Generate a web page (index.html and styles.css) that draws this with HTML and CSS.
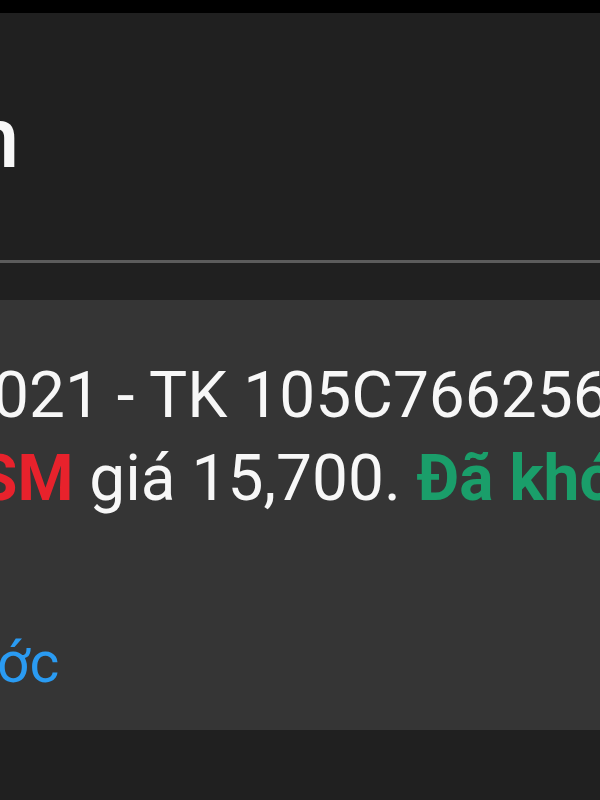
FILE: index.html
```html
<!DOCTYPE html>
<html lang="vi">
<head>
    <meta charset="UTF-8">
    <meta name="viewport" content="width=device-width, initial-scale=1.0">
    <title>Thông tin</title>
    <link rel="stylesheet" href="styles.css">
</head>
<body>
    <div class="status-bar"></div>

    <header class="toolbar">
        <div class="title-row">
            <span class="clip"><span>Thông ti</span></span><span class="title">n</span>
        </div>
    </header>
    <div class="divider"></div>

    <main class="content">
        <section class="notice">
            <div class="line line-first">
                <span class="clip"><span>Ngày 15/03/2</span></span>
                <span>021 - TK 105C766256: Lệnh mua 1,000</span>
            </div>
            <div class="line line-second">
                <span class="clip"><span>CP <b class="ticker">A</b></span></span>
                <span><b class="ticker">SM</b> giá 15,700. <b class="matched">Đã khớp 1,000 CP</b></span>
            </div>
            <div class="line line-link">
                <span class="clip"><span class="link">Xem lệnh trư</span></span>
                <a class="link" href="#">ớc</a>
            </div>
        </section>
    </main>
</body>
</html>
```

FILE: styles.css
```css
body {
    font-family: Roboto, 'Noto Sans', sans-serif;
    background-color: #202020;
    color: #f7f7f7;
    margin: 0;
    padding: 0;
    overflow: hidden;
}

.status-bar {
    height: 13px;
    background: #000;
}

.toolbar {
    background: #202020;
    padding: 83px 0 79px 0;
    overflow: hidden;
}

.title-row {
    display: flex;
    white-space: nowrap;
    margin-left: -28px;
    font-size: 85px;
    font-weight: 500;
    line-height: 85px;
}

/* zero-width anchor, text overflows to the left off screen */
.clip {
    display: flex;
    justify-content: flex-end;
    width: 0;
    white-space: nowrap;
}

.divider {
    height: 3px;
    background: #5c5c5c;
}

.content {
    padding-top: 37px;
}

.notice {
    background: #353535;
    padding: 54px 0 32px 0;
    overflow: hidden;
}

.line {
    display: flex;
    white-space: nowrap;
    font-size: 64px;
    line-height: 83px;
}

.line-first {
    margin-left: -7px;
}

.line-second {
    margin-left: -22px;
}

.ticker {
    color: #e8222c;
    font-weight: 700;
}

.matched {
    color: #1a9e6a;
    font-weight: 700;
}

.line-link {
    margin-top: 108px;
    margin-left: -3px;
    font-size: 57px;
    line-height: 70px;
}

.link {
    color: #2a9bf2;
    text-decoration: none;
}
```
